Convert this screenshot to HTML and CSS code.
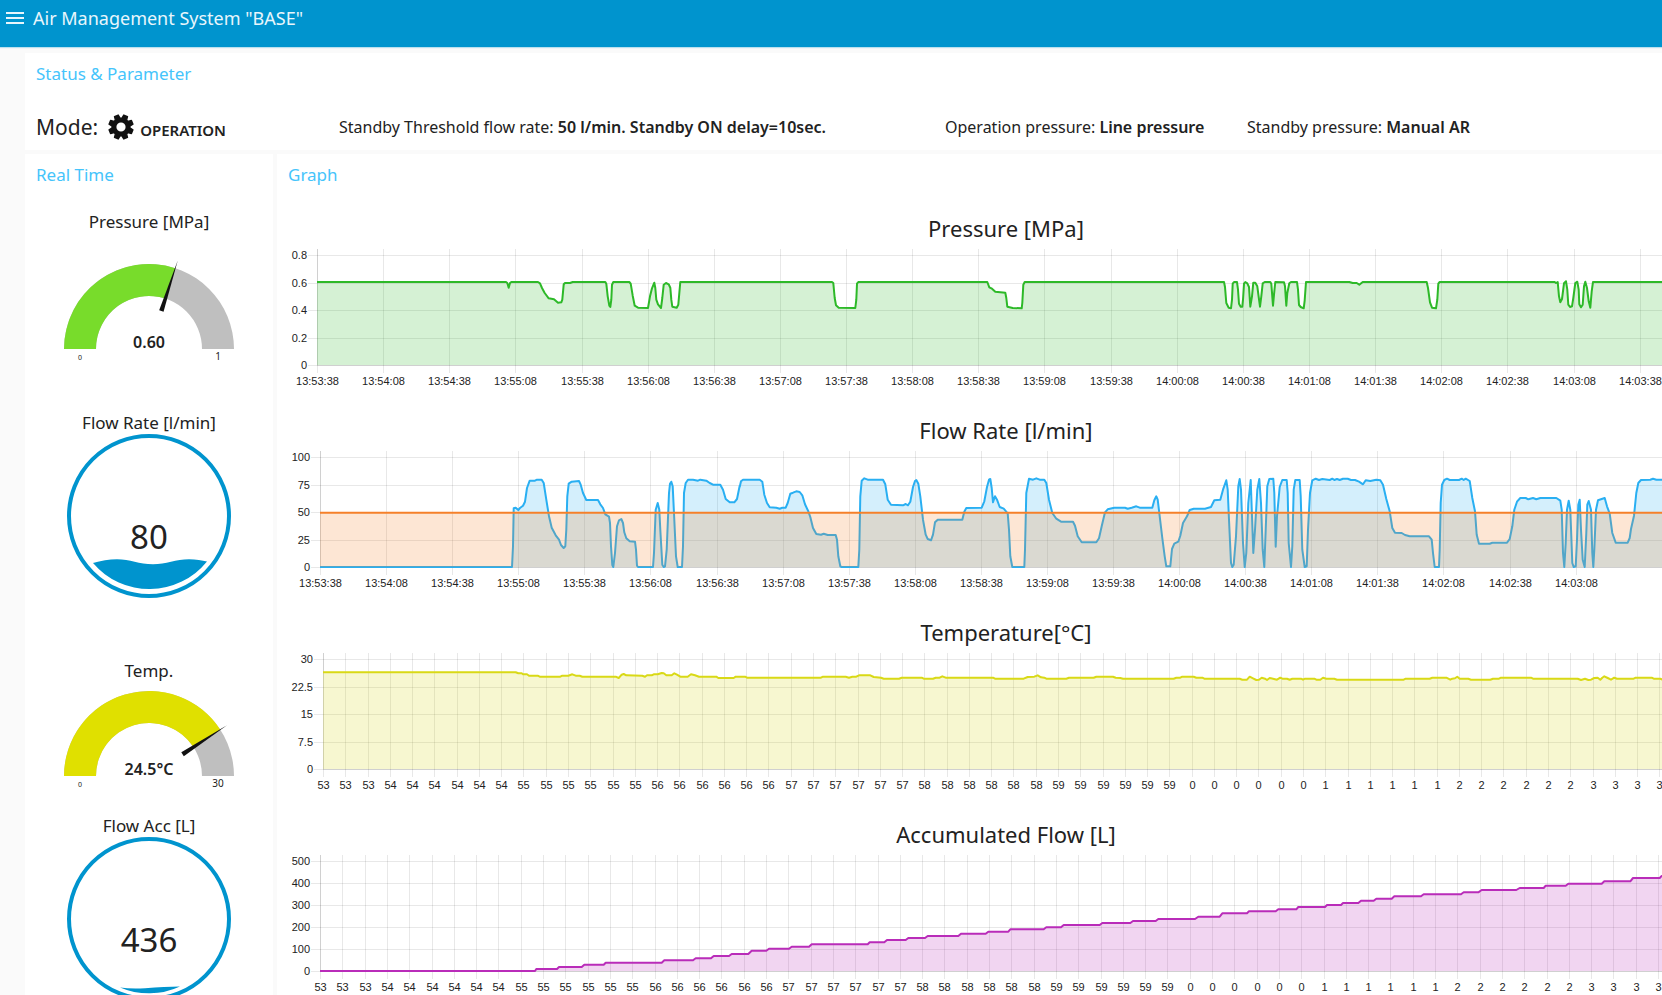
FILE: index.html
```html
<!DOCTYPE html>
<html lang="en">
<head>
<meta charset="utf-8">
<title>Air Management System "BASE"</title>
<link rel="stylesheet" href="styles.css">
</head>
<body>
<header class="toolbar">
  <button class="menu-button" type="button" aria-label="Menu">
    <svg width="18" height="12" viewBox="0 0 18 12" aria-hidden="true"><path d="M0 0h18v2H0zM0 5h18v2H0zM0 10h18v2H0z" fill="currentColor"/></svg>
  </button>
  <h1 class="toolbar-title">Air Management System "BASE"</h1>
</header>

<main class="dashboard">
  <section class="card status">
    <h2 class="card-title">Status &amp; Parameter</h2>
    <div class="params">
      <div class="mode">
        <span class="mode-label">Mode:</span>
        <svg class="gear" width="26" height="26" viewBox="-13 -13 26 26" aria-hidden="true">
          <g fill="#111">
            <path fill-rule="evenodd" d="M0-9.6A9.6 9.6 0 1 0 0 9.6A9.6 9.6 0 1 0 0-9.6zM0-4.6A4.6 4.6 0 1 1 0 4.6A4.6 4.6 0 1 1 0-4.6z"/>
            <g id="teeth" transform="rotate(22.5)">
              <path id="tooth" d="M-3.2-8.6L-2.7-12.2Q-2.6-12.8-2-12.8H2Q2.6-12.8 2.7-12.2L3.2-8.6z"/>
              <use href="#tooth" transform="rotate(45)"/><use href="#tooth" transform="rotate(90)"/>
              <use href="#tooth" transform="rotate(135)"/><use href="#tooth" transform="rotate(180)"/>
              <use href="#tooth" transform="rotate(225)"/><use href="#tooth" transform="rotate(270)"/>
              <use href="#tooth" transform="rotate(315)"/>
            </g>
          </g>
        </svg>
        <strong class="mode-value">OPERATION</strong>
      </div>
      <p class="param">Standby Threshold flow rate: <strong>50 l/min. Standby ON delay=10sec.</strong></p>
      <p class="param">Operation pressure: <strong>Line pressure</strong></p>
      <p class="param">Standby pressure: <strong>Manual AR</strong></p>
    </div>
  </section>

  <section class="card realtime">
    <h2 class="card-title">Real Time</h2>
    <div class="gauges">
      <div class="gauge gauge-tall">
        <h3 class="gauge-title">Pressure [MPa]</h3>
        <svg class="dial" width="190" height="131" viewBox="-95 -93 190 131">
          <path d="M-85 0A85 85 0 0 1 85 0H53A53 53 0 0 0-53 0z" fill="#bfbfbf"/>
          <path d="M-85 0A85 85 0 0 1 26.3-80.8L16.4-50.4A53 53 0 0 0-53 0z" fill="#78dc2b"/>
          <path d="M40-2.3L93 0L40 2.3z" fill="#111" transform="rotate(-72)"/>
          <text class="dial-value" x="0" y="-1">0.60</text>
          <text class="dial-min" x="-69" y="11">0</text>
          <text class="dial-max" x="69" y="11">1</text>
        </svg>
      </div>
      <div class="gauge gauge-level">
        <h3 class="gauge-title">Flow Rate [l/min]</h3>
        <svg class="level" width="164" height="164" viewBox="0 0 164 164">
          <circle cx="82" cy="82" r="80" fill="none" stroke="#0094ce" stroke-width="4"/>
          <path d="M26 129C34 127 42 125.300 50 125.300C63 125.300 72 130.300 86 130.300C99 130.300 109 125.300 122 125.300C129 125.300 135 126.500 140 127.500A74 74 0 0 1 26 129z" fill="#0094ce"/>
          <text class="level-value" x="82" y="115">80</text>
        </svg>
      </div>
      <div class="gauge">
        <h3 class="gauge-title">Temp.</h3>
        <svg class="dial" width="190" height="131" viewBox="-95 -93 190 131">
          <path d="M-85 0A85 85 0 0 1 85 0H53A53 53 0 0 0-53 0z" fill="#bfbfbf"/>
          <path d="M-85 0A85 85 0 0 1 71.300-46.300L44.400-28.900A53 53 0 0 0-53 0z" fill="#e0e000"/>
          <path d="M40-2.3L93 0L40 2.3z" fill="#111" transform="rotate(-33)"/>
          <text class="dial-value" x="0" y="-1">24.5°C</text>
          <text class="dial-min" x="-69" y="11">0</text>
          <text class="dial-max" x="69" y="11">30</text>
        </svg>
      </div>
      <div class="gauge gauge-level">
        <h3 class="gauge-title">Flow Acc [L]</h3>
        <svg class="level" width="164" height="164" viewBox="0 0 164 164">
          <circle cx="82" cy="82" r="80" fill="none" stroke="#0094ce" stroke-width="4"/>
          <path d="M53 150.500Q64 152 78 151.200Q98 149.500 113 149.500A74 74 0 0 1 53 150.500z" fill="#0094ce"/>
          <text class="level-value" x="82" y="115">436</text>
        </svg>
      </div>
    </div>
  </section>

  <section class="card graphs">
    <h2 class="card-title">Graph</h2>
    <div class="charts">
      <figure class="chart"><figcaption>Pressure [MPa]</figcaption><svg data-chart="pressure"></svg></figure>
      <figure class="chart"><figcaption>Flow Rate [l/min]</figcaption><svg data-chart="flow"></svg></figure>
      <figure class="chart"><figcaption>Temperature[°C]</figcaption><svg data-chart="temperature"></svg></figure>
      <figure class="chart"><figcaption>Accumulated Flow [L]</figcaption><svg data-chart="accumulated"></svg></figure>
    </div>
  </section>
</main>
<script src="charts.js"></script>
</body>
</html>
```

FILE: styles.css
```css
* { box-sizing: border-box; }

html {
  overflow-x: hidden;
  scrollbar-width: none;
}

body {
  margin: 0;
  background: #fafafa;
  color: #222;
  font-family: "Noto Sans", sans-serif;
  font-size: 16px;
  overflow-x: hidden;
  scrollbar-width: none;
}

h1, h2, h3, p, figure { margin: 0; font-weight: 400; }

.toolbar {
  display: flex;
  align-items: center;
  gap: 9px;
  padding: 0 6px 11px;
  background: #0094ce;
  color: #e8f6fc;
  box-shadow: 0 1px 1px rgba(0, 148, 206, .25);
}

.menu-button {
  display: flex;
  padding: 0;
  border: 0;
  background: none;
  color: inherit;
}

.toolbar-title { font-size: 18px; line-height: 36px; }

.dashboard {
  display: grid;
  grid-template-columns: 248px 1fr;
  gap: 4px;
  margin: 6px -73px 0 25px;
}

.card { background: #fff; padding: 9px 8px 7px; }
.status { grid-column: 1 / -1; }

.card-title {
  padding-left: 3px;
  color: #45c4fb;
  font-size: 17px;
  line-height: 24px;
}

.params {
  display: grid;
  grid-template-columns: 303fr 606fr 302fr 480fr;
  align-items: center;
  height: 32px;
  margin-top: 25px;
  padding-left: 3px;
  white-space: nowrap;
}

.mode { display: flex; align-items: center; }
.mode-label { font-size: 21px; line-height: 32px; }
.gear { margin: 0 6px 0 10px; }
.mode-value { padding-top: 6px; font-size: 15px; font-weight: 600; line-height: 24px; }
.param strong { font-weight: 600; }

.gauges { padding-top: 23px; }
.gauge { display: flex; flex-direction: column; align-items: center; }
.gauge-title { font-size: 17px; line-height: 24px; }
.gauge-tall .dial { margin: 22px 0 24px; }
.gauge-level .level { margin: -1px 0 61px; }
.gauge text { text-anchor: middle; fill: #222; }
.dial-value { font-size: 16px; font-weight: 600; }
.dial-min { font-size: 7px; }
.dial-max { font-size: 10px; }
.level-value { font-size: 33px; }

.charts { display: grid; gap: 16px; padding-top: 26px; }
.chart figcaption { font-size: 22px; line-height: 30px; text-align: center; }
.chart svg { display: block; width: 100%; height: 156px; }
.chart text { font-family: "Liberation Sans", sans-serif; font-size: 11px; fill: #222; }
.chart .x-label { text-anchor: middle; }
.chart .y-label { text-anchor: end; }
.chart .grid { stroke: rgba(0, 0, 0, .09); fill: none; }
.chart .axis { stroke: rgba(0, 0, 0, .1); fill: none; }
.chart .line { fill: none; stroke-width: 2; stroke-linejoin: round; }
.chart .area { stroke: none; fill-opacity: .2; }
```

FILE: charts.js
```js
// Plot geometry shared by the four charts.
const TOP = 12, ZERO = 122, PLOT_TOP = 6, BASE_WIDTH = 1442, UNITS = 3;

const clock = (count) => Array.from({ length: count }, (_, i) => {
  const t = 13 * 3600 + 53 * 60 + 38 + i * 30;
  return [t / 3600, t / 60 % 60, t % 60].map(n => String(Math.floor(n)).padStart(2, '0')).join(':');
});
const minutes = (count) => Array.from({ length: count }, (_, i) => String((53 + Math.floor((i + 3) / 6)) % 60));

// Each series is recorded in three pages of 1380 units; a page lists "x,y" samples.
const charts = {
  pressure: {
    left: 32, origin: 113, step: 198.4, zero: 466, labels: clock(21), ticks: ['0.8', '0.6', '0.4', '0.2', '0'],
    series: [{ color: '#2db928', pages: [
      '113,217 680,217 684,220 688,234 692,220 696,217 776,217 782,221 788,235 796,250 808,266 824,269 836,279 846,278 849,270 853,224 857,220 872,220 880,217 978,217 981,222 985,260 990,288 993,292 996,270 998,225 1002,217 1050,217 1054,222 1060,258 1066,288 1076,294 1106,295 1112,260 1118,236 1125,219 1128,235 1131,270 1136,284 1145,295 1149,265 1153,225 1160,220 1168,224 1173,234 1176,270 1179,291 1192,294 1197,285 1203,217 1380,217',
      '0,217 278,217 282,220 286,265 290,287 298,294 348,295 351,270 353,222 357,217 744,217 750,233 758,237 768,246 798,249 801,265 804,291 820,295 847,296 849,280 852,225 856,217 1380,217',
      '0,217 74,217 77,232 81,280 88,294 95,296 98,270 100,222 104,217 113,217 116,240 119,282 124,291 129,291 131,270 134,222 138,217 144,221 149,232 153,291 158,260 162,219 168,219 174,230 178,262 182,291 186,260 190,221 196,217 213,217 216,222 221,288 224,255 228,217 254,218 257,230 261,288 264,250 270,221 275,217 293,217 296,240 299,286 304,292 313,296 316,272 320,217 450,217 460,220 472,220 480,225 490,217 682,217 686,235 692,278 698,294 710,296 714,270 717,222 721,217 1066,217 1070,220 1075,217 1079,260 1083,278 1088,268 1094,221 1100,215 1104,240 1107,285 1112,292 1118,290 1122,265 1128,220 1134,216 1138,240 1140,284 1145,293 1150,285 1154,230 1158,216 1163,235 1168,275 1173,294 1177,245 1181,217 1700,217' ] }]
  },
  flow: {
    left: 35, origin: 121, step: 198.25, zero: 1072, labels: clock(20), ticks: ['100', '75', '50', '25', '0'],
    series: [{ color: '#29aff2', pages: [
      '121,1072 697,1072 700,1010 702,896 708,894 716,901 722,894 730,888 736,876 742,835 750,813 766,813 772,810 786,810 792,820 800,870 808,920 816,954 828,977 838,990 844,1006 852,1015 857,1010 860,960 863,860 867,822 876,816 898,814 903,825 910,850 920,871 955,871 962,884 970,895 977,914 988,921 991,940 994,1010 998,1066 1001,1072 1006,1030 1012,950 1018,932 1025,928 1030,940 1034,968 1040,986 1050,995 1066,996 1069,1020 1072,1068 1075,1072 1120,1072 1123,1030 1128,900 1134,880 1139,900 1142,960 1148,1065 1152,1072 1156,1070 1161,1020 1168,850 1171,822 1175,816 1179,830 1184,930 1189,1040 1194,1072 1207,1072 1210,1010 1213,850 1218,820 1225,810 1240,810 1255,813 1262,810 1280,813 1290,820 1300,825 1322,825 1330,840 1338,868 1350,878 1364,878 1372,868 1380,828',
      '0,832 4,815 10,810 60,810 68,816 74,855 82,880 90,893 110,894 120,897 128,894 138,894 144,880 152,852 160,849 170,845 180,847 188,857 196,884 206,905 212,922 220,955 230,973 244,975 252,972 264,976 288,976 292,990 296,1040 302,1070 306,1072 356,1072 359,1020 362,860 366,813 374,806 384,810 430,810 437,824 444,870 454,885 490,887 498,883 505,887 512,876 520,832 526,814 530,811 536,822 542,860 550,930 558,975 564,988 574,992 580,975 586,938 594,930 668,930 674,906 680,895 726,894 734,875 742,832 748,810 752,808 756,835 760,878 766,860 772,870 780,892 792,897 804,911 808,960 812,1040 818,1072 854,1072 856,1020 860,850 868,807 880,810 890,806 900,810 914,810 920,820 928,870 938,910 950,927 964,936 1000,936 1006,948 1014,980 1026,998 1070,998 1078,986 1086,950 1096,908 1104,899 1124,894 1156,894 1164,897 1176,894 1190,890 1200,894 1238,894 1244,872 1250,860 1254,870 1260,920 1268,985 1275,1040 1280,1070 1292,1070 1297,1018 1304,1002 1316,996 1322,978 1330,940 1342,920 1350,901 1362,897 1380,897',
      '0,897 16,897 34,892 44,872 62,870 70,840 80,812 84,840 88,930 94,1060 98,1072 102,1065 109,980 116,830 120,808 124,840 130,1000 135,1072 140,1030 146,880 153,811 157,920 161,1030 166,960 173,840 179,808 184,880 189,1020 194,1072 198,960 203,830 209,808 221,807 224,850 228,1011 232,920 240,832 248,811 261,811 264,850 267,1000 274,1072 278,1010 282,840 287,811 300,811 303,860 308,1020 315,1072 321,1070 325,960 331,850 338,812 348,807 358,811 368,808 390,811 398,807 404,811 412,808 420,811 430,807 444,807 454,811 466,811 478,816 490,824 498,812 512,814 530,810 542,812 550,825 560,868 570,905 578,955 586,969 606,970 616,976 630,980 688,980 696,990 700,1030 705,1072 718,1072 720,1020 723,880 727,825 734,811 742,807 750,811 778,811 786,807 792,811 798,807 810,814 818,865 826,905 831,975 838,1002 870,1002 878,999 922,999 930,988 938,950 944,900 952,876 962,865 978,865 986,869 1000,865 1010,869 1022,865 1070,865 1082,873 1086,900 1090,1030 1094,1072 1098,1000 1102,900 1107,873 1112,900 1118,1060 1122,1072 1128,1070 1132,990 1136,885 1140,870 1144,960 1149,1050 1155,1072 1160,970 1163,885 1167,874 1174,900 1178,1030 1181,1072 1184,1020 1189,900 1195,872 1215,865 1222,890 1230,912 1238,970 1248,999 1284,999 1290,985 1294,958 1303,918 1310,850 1316,820 1324,811 1352,810 1360,807 1370,810 1700,810' ] },
      { color: '#f5802a', pages: ['121,909 1380,909', '0,909', '1700,909'] }]
  },
  temperature: {
    left: 38, origin: 130, step: 66.82, zero: 477, labels: minutes(61), ticks: ['30', '22.5', '15', '7.5', '0'],
    series: [{ color: '#d9d916', pages: [
      '130,187 708,187 716,190 726,190 730,193 742,193 748,197 774,197 780,200 842,200 848,197 866,197 878,193 888,197 900,197 908,200 1008,200 1017,204 1026,194 1032,192 1040,196 1088,197 1096,200 1102,196 1116,196 1122,193 1134,193 1146,189 1152,190 1160,196 1176,196 1184,190 1192,194 1202,200 1224,200 1234,193 1246,196 1258,200 1310,200 1316,204 1362,204 1368,200 1380,200',
      '0,200 16,200 22,203 244,203 250,200 318,200 328,203 338,200 350,200 358,196 392,196 402,201 424,203 432,206 478,206 486,203 546,203 552,206 580,206 588,203 600,203 608,199 618,203 760,203 766,206 852,206 864,201 884,200 894,196 904,202 914,203 920,206 980,206 988,203 1062,203 1070,200 1120,200 1128,203 1142,204 1150,206 1302,206 1310,203 1322,203 1328,200 1362,200 1370,203 1380,203',
      '0,203 8,203 14,206 120,206 128,209 142,209 150,200 160,205 170,210 178,209 186,203 196,206 202,210 210,204 220,206 232,209 242,203 248,206 262,206 270,209 278,206 304,206 310,209 316,206 344,206 350,209 362,209 370,203 380,206 404,206 412,209 612,209 618,206 690,206 698,203 740,203 752,209 758,206 766,205 773,200 780,206 806,206 814,209 872,209 880,206 898,206 904,203 994,203 1000,206 1134,206 1144,210 1156,206 1166,210 1174,209 1184,204 1194,203 1202,209 1208,203 1214,199 1224,204 1234,209 1244,203 1252,206 1302,206 1308,203 1356,203 1362,206 1382,206 1390,209 1700,209' ] }]
  },
  accumulated: {
    left: 35, origin: 121, step: 66.9, zero: 1083, labels: minutes(61), ticks: ['500', '400', '300', '200', '100', '0'],
    series: [{ color: '#b92cb9', pages: [
      '121,1083 766,1083 770,1077 832,1077 838,1071 906,1071 914,1064 972,1064 978,1058 1146,1058 1154,1051 1240,1051 1248,1045 1294,1045 1302,1038 1348,1038 1356,1032 1380,1032',
      '0,1032 26,1032 36,1022 80,1022 88,1016 148,1016 156,1010 208,1010 216,1003 384,1003 390,997 434,997 442,990 498,990 506,984 556,984 564,978 656,978 664,971 738,971 746,965 806,965 812,958 912,958 920,952 964,952 972,945 1080,945 1088,939 1172,939 1180,933 1248,933 1256,927 1366,927 1376,920 1380,920',
      '0,920 60,920 68,910 142,910 148,904 228,904 236,898 290,898 296,891 376,891 382,885 424,885 430,879 476,879 484,872 522,872 530,866 576,866 584,859 664,859 672,853 784,853 792,847 836,847 846,840 950,840 960,834 1032,834 1038,827 1098,827 1106,821 1206,821 1214,814 1292,814 1300,804 1380,804 1386,798 1480,798 1490,791 1700,791' ] }]
  }
};

const samples = (pages) => pages.flatMap((page, i) =>
  page.split(' ').map(pair => {
    const [x, y] = pair.split(',').map(Number);
    return [x + i * 1380, y];
  }));

function draw(svg, id) {
  const c = charts[id];
  const width = svg.clientWidth;
  const k = width / BASE_WIDTH / UNITS;
  const right = width - 12;
  const px = x => c.left + (x - c.origin) * k;
  const py = y => ZERO + (y - c.zero) / UNITS;
  let out = `<clipPath id="${id}-area"><rect x="${c.left}" y="0" width="${right - c.left}" height="${ZERO + 1}"/></clipPath>`;

  let grid = '';
  c.ticks.forEach((label, i) => {
    const y = Math.round(TOP + (ZERO - TOP) * i / (c.ticks.length - 1)) + 0.5;
    grid += `M${c.left - 9} ${y}H${right}`;
    out += `<text class="y-label" x="${c.left - 10}" y="${y + 3}">${label}</text>`;
  });
  c.labels.forEach((label, i) => {
    const x = Math.round(c.left + c.step * i * k) + 0.5;
    if (x > right) return;
    grid += `M${x} ${PLOT_TOP}V${ZERO + 8}`;
    out += `<text class="x-label" x="${x}" y="142">${label}</text>`;
  });
  out += `<path class="grid" d="${grid}"/>`;
  out += `<path class="axis" d="M${c.left + 0.5} ${PLOT_TOP}V${ZERO + 0.5}H${right}"/>`;

  c.series.forEach(s => {
    const pts = samples(s.pages);
    const line = pts.map(([x, y]) => `${px(x).toFixed(1)} ${py(y).toFixed(1)}`).join('L');
    out += `<g clip-path="url(#${id}-area)">
      <path class="area" fill="${s.color}" d="M${c.left} ${ZERO}L${line}L${right + 20} ${ZERO}z"/>
      <path class="line" stroke="${s.color}" d="M${line}"/></g>`;
  });
  svg.innerHTML = out;
}

const drawAll = () => document.querySelectorAll('[data-chart]').forEach(svg => draw(svg, svg.dataset.chart));
drawAll();
window.addEventListener('resize', drawAll);
```
